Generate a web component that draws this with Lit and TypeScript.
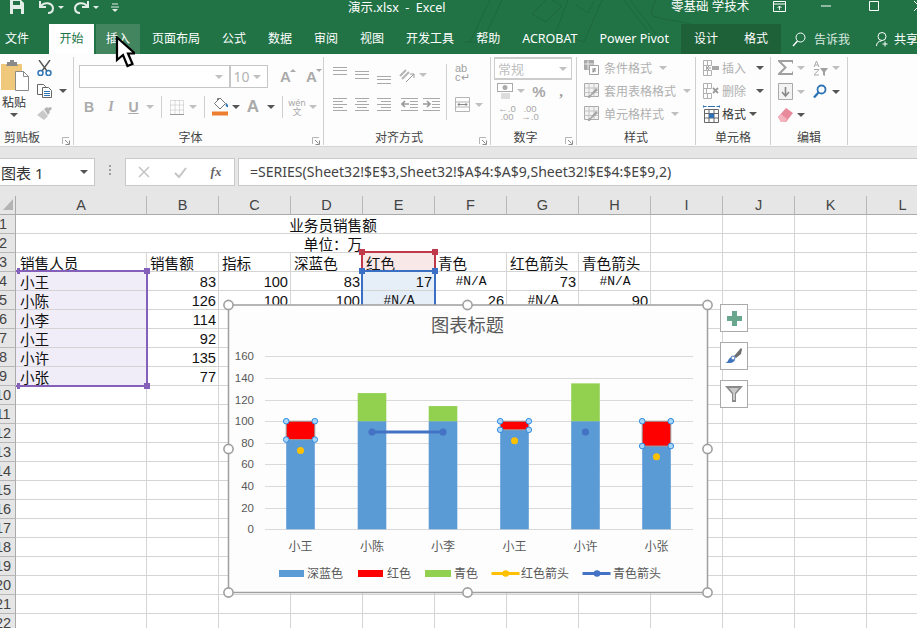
import { LitElement, html, css, svg, nothing } from 'lit';
import { customElement } from 'lit/decorators.js';

const GRAY = '#a9a9a9';

// small dropdown triangle used all over the ribbon
const caret = (dark = false) => html`<i class="caret ${dark ? 'dark' : ''}"></i>`;

const launcher = html`<svg class="launcher" width="8" height="8" viewBox="0 0 8 8">
  <path d="M.5 7V.5H7" fill="none" stroke="#b5b5b5"/><path d="M3 3l3.500 3.500M7.500 3.500v4h-4" fill="none" stroke="#8a8a8a"/>
</svg>`;

const lines = (rows: [number, number, number][], color = GRAY) =>
  rows.map(([y, a, b]) => svg`<path d="M${a} ${y + 0.5}H${b}" stroke=${color}/>`);

const alignV = (top: number) => html`<svg width="14" height="20" viewBox="0 0 14 20">
  ${lines([[top, 0, 14], [top + 3, 0, 14], [top + 7, 0, 14]])}
</svg>`;

const alignH = (kind: 'l' | 'c' | 'r') => {
  const short: [number, number] = kind === 'l' ? [0, 10] : kind === 'c' ? [2, 12] : [4, 14];
  return html`<svg width="14" height="14" viewBox="0 0 14 14">
    ${lines([[1, 0, 14], [4, short[0], short[1]], [7, 0, 14], [10, short[0], short[1]], [13, 0, 14]])}
  </svg>`;
};

const indent = (flip: boolean) => html`<svg width="17" height="14" viewBox="0 0 17 14">
  ${lines([[1, 0, 17], [13, 0, 17], [4, 9, 17], [7, 9, 17], [10, 9, 17]])}
  <path d=${flip ? 'M0 7h7M4 4l3 3-3 3' : 'M1 7h7M4 4L1 7l3 3'} fill="none" stroke="#999" stroke-width="1.600"/>
</svg>`;

const gridIcon = html`<svg width="14" height="15" viewBox="0 0 14 15">
  <path d="M.5.5h13v14H.5zM.5 5h13M.5 10h13M5 .5v14M9.500.5v14" fill="none" stroke="#bdbdbd" stroke-dasharray="1 1"/>
  <path d="M0 14.500h14" stroke="#999"/>
</svg>`;

const fillIcon = html`<svg width="17" height="20" viewBox="0 0 17 20">
  <path d="M8 1l5.500 5.500L8 12 2.500 6.500z" fill="#fff" stroke="#777"/>
  <path d="M5.500 3.500V1.500h2" fill="none" stroke="#777"/>
  <path d="M14 6c1.500 1 2.500 2.500 2 4-1 .5-2-.5-2.400-1.500z" fill="#2f75b5"/>
  <rect y="14.500" width="16" height="4" fill="#ed7d31"/>
</svg>`;

const tableStyle = html`<svg width="15" height="15" viewBox="0 0 15 15">
  <path d="M.5.5h14v13H.5z" fill="#f2f2f2" stroke="#aaa"/>
  <path d="M.5 5h14M.5 9.500h14M5 .5v13M10 .5v13" stroke="#c4c4c4"/>
  <path d="M4 15c0-2 .5-3 2-3l6-7 2 2-7 6c0 1.500-1 2-3 2z" fill="#a5a5a5"/>
</svg>`;

const condIcon = html`<svg width="15" height="15" viewBox="0 0 15 15">
  <path d="M.5.5h9v9h-9z" fill="#a8a8a8" stroke="#a8a8a8"/><path d="M.5 4h9M4 .5v9" stroke="#eee"/>
  <path d="M5.500 5.500h9v9h-9z" fill="#fff" stroke="#a0a0a0"/><path d="M8 9h4M8 11h4M11 8l-2 4.500" stroke="#888" fill="none"/>
</svg>`;

const cellInsert = (del: boolean) => html`<svg width="17" height="16" viewBox="0 0 17 16">
  <path d="M.5.5h8v5h-8zM4.500.5v5M.5 10.500h8v5h-8zM4.500 10.500v5" fill="none" stroke="#b0b0b0"/>
  <path d="M.5 5.500h3v5h-3z" fill="none" stroke="#b0b0b0"/>
  ${del
    ? svg`<path d="M10 5l5 5M15 5l-5 5" stroke="#9a9a9a" stroke-width="1.800" fill="none"/>`
    : svg`<path d="M4 8h4M6 6L4 8l2 2" fill="none" stroke="#999"/><rect x="9" y="6" width="7" height="4" fill="#a8a8a8"/>`}
</svg>`;

const cellFormat = html`<svg width="17" height="18" viewBox="0 0 17 18">
  <path d="M.5 1.500h3M.5.5v2M13.500 1.500h3M16.500.5v2M5 1.500h7" fill="none" stroke="#2f6fb5"/>
  <path d="M1.500 4.500h14v13h-14zM1.500 8.500h14M1.500 13h14M6 4.500v13M11 4.500v13" fill="none" stroke="#666"/>
  <rect x="6" y="8.500" width="5" height="4.500" fill="#2f6fb5"/>
</svg>`;

@customElement('app-root')
export class AppRoot extends LitElement {
  static styles = css`
    :host {
      display: block;
      width: 917px;
      height: 628px;
      overflow: hidden;
      background: #fff;
      font-family: 'Noto Sans', 'Noto Sans CJK SC', sans-serif;
      font-size: 12px;
      position: relative;
    }
    svg { display: block; flex: none; }

    /* title bar + tabs */
    .head { position: relative; height: 54px; background: #217346; color: #fff; overflow: hidden; }
    .sketch { position: absolute; left: 460px; top: 0; }
    .titlebar { position: relative; display: flex; align-items: center; height: 24px; }
    .qat { display: grid; grid-template-columns: 10px 14px 15px 15px 14px 6px 15px 14px 24px; align-items: center; justify-items: center; width: 348px; flex: none; height: 14px; margin-top: -10px; }
    .title { font-size: 12.500px; width: 323px; flex: none; margin-top: -12px; white-space: pre; }
    .account { font-size: 12.500px; width: 102px; flex: none; margin-top: -13px; white-space: nowrap; }
    .winbtns { display: grid; grid-template-columns: 13px 35px 10px 38px 10px 35px 10px; align-items: center; margin-top: -12px; }
    .tick { width: 0; height: 0; border-left: 3px solid transparent; border-right: 3px solid transparent; border-top: 3px solid #e4eee8; }
    .tabs { position: relative; display: flex; height: 30px; margin-left: -6px; width: 940px; }
    .tab { display: flex; flex: none; align-items: center; padding: 0 11px; white-space: nowrap; line-height: 1; }
    .tab.latin { font-size: 12.500px; }
    .tab.home { background: #fff; color: #217346; padding: 0 10px; margin: 0 2px 0 9px; width: 45px; box-sizing: border-box; justify-content: center; }
    .tab.hover { background: #43855f; padding: 0 10px; margin-right: 1px; }
    .ctx { display: flex; flex: none; background: #1e6139; margin-left: 1px; padding: 0 1px; height: 30px; width: 100px; box-sizing: border-box; justify-content: center; }
    .ctx .tab { padding: 0 13px; }
    .search { display: flex; flex: none; align-items: center; gap: 8px; margin-left: 11px; color: #dce9e1; white-space: nowrap; }
    .share { display: flex; flex: none; align-items: center; gap: 5px; margin-left: 26px; white-space: nowrap; }

    /* ribbon */
    .ribbon { display: flex; height: 93px; box-sizing: border-box; background: #fdfdfd; border-bottom: 1px solid #d4d4d4; color: #b0b0b0; }
    .group { position: relative; display: flex; flex-direction: column; flex: none; box-sizing: border-box; border-right: 1px solid #d0d0d0; height: 88px; margin-top: 3px; }
    .g-clip { width: 74px; }
    .g-font { width: 250px; padding-left: 5px; }
    .g-align { width: 167px; }
    .g-num { width: 86px; padding-left: 3px; }
    .g-style { width: 119px; padding-left: 7px; }
    .g-cell { width: 75px; padding-left: 7px; }
    .g-edit { width: 77px; padding-left: 6px; }
    .glabel { position: absolute; left: 0; right: 0; bottom: -2px; text-align: center; color: #444; line-height: 18px; }
    .shift { right: 16px; }
    .g-clip .glabel { right: 29px; }
    .launcher { position: absolute; right: 3px; bottom: 0; }
    .caret { display: block; width: 0; height: 0; border-left: 4px solid transparent; border-right: 4px solid transparent; border-top: 4px solid #c0c0c0; }
    .caret.dark { border-top-color: #555; }

    .clip { display: flex; padding-top: 3px; }
    .paste { display: flex; flex-direction: column; align-items: center; width: 26px; margin-right: 10px; margin-left: 1px; color: #333; font-size: 12px; }
    .paste b { font-weight: 400; line-height: 20px; margin-top: 2px; }
    .side { display: flex; flex-direction: column; gap: 8px; }
    .side div { display: flex; align-items: center; gap: 3px; }
    .side .caret { margin-left: 4px; }

    .combo { display: flex; align-items: center; justify-content: space-between; box-sizing: border-box; height: 23px; border: 1px solid #c6c6c6; padding: 0 6px; background: #fff; }
    .row1 { display: flex; align-items: center; margin-top: 8px; }
    .combo.name { width: 157px; border-right: none; }
    .combo.size { width: 41px; padding: 0 6px 0 3px; border-left-width: 2px; font-size: 14px; color: #b3b3b3; }
    .grow { display: grid; grid-template-columns: 29px 23px; justify-items: center; margin-left: 3px; }
    .bigA { position: relative; font: 700 15px 'Liberation Sans', sans-serif; color: #aaa; line-height: 16px; }
    .bigA i { position: absolute; right: -5px; top: 0; width: 0; height: 0; border-left: 3px solid transparent; border-right: 3px solid transparent; }
    .bigA i.up { border-bottom: 3px solid #aaa; }
    .bigA i.down { border-top: 3px solid #aaa; }
    .row2 { display: grid; grid-template-columns: 20px 24px 21px 12px 10px 21px 12px 10px 22px 10px 24px 11px 12px 18px 14px; align-items: center; justify-items: center; height: 24px; margin-top: 7px; }
    .fmt { font: 700 14px 'Liberation Sans', sans-serif; color: #aaa; }
    .fmt.i { font-style: italic; font-family: 'Liberation Serif', serif; }
    .fmt.u { text-decoration: underline; }
    .fmt.A { font-size: 17px; }
    .vsep { width: 1px; height: 22px; background: #d0d0d0; }
    .wen { display: flex; flex-direction: column; align-items: center; font-size: 9px; line-height: 9px; color: #aaa; }

    .aligns { display: flex; padding-left: 5px; }
    .a-rows { display: flex; flex-direction: column; width: 117px; }
    .a-top { display: grid; grid-template-columns: 22px 22px 22px 24px 8px; align-items: center; justify-items: center; height: 20px; margin-top: 8px; }
    .a-bot { display: grid; grid-template-columns: 22px 22px 22px 28px 16px; align-items: center; justify-items: center; margin-top: 12px; }
    .a-side { display: flex; flex-direction: column; border-left: 1px solid #d0d0d0; height: 56px; margin-top: 7px; padding-left: 8px; gap: 15px; }
    .wrapab { font: 11px/9px 'Liberation Sans', sans-serif; color: #a0a0a0; width: 15px; }
    .merge { display: flex; align-items: center; gap: 5px; }

    .combo.fmtbox { width: 78px; height: 23px; margin-top: 0; font-size: 13px; padding: 0 4px 0 3px; color: #bdbdbd; border-width: 2px 1px; border-color: #ccc; }
    .n-row { display: grid; grid-template-columns: 22px 10px 26px 18px; align-items: center; justify-items: center; margin-top: 2px; height: 18px; }
    .n-row2 { display: grid; grid-template-columns: 26px 20px; justify-items: center; margin-top: 5px; font: 9.500px/8px 'Liberation Sans', sans-serif; color: #a8a8a8; text-align: center; }
    .pct { font: 700 15px 'Liberation Sans', sans-serif; color: #a8a8a8; }
    .comma { font: 700 15px/10px 'Liberation Serif', serif; color: #999; }

    .s-rows { display: flex; flex-direction: column; gap: 4px; padding-top: 1px; }
    .s-row { display: flex; align-items: center; height: 19px; gap: 5px; white-space: nowrap; }
    .s-row .caret { margin-left: 2px; }
    .c-row { display: flex; align-items: center; height: 19px; gap: 2px; white-space: nowrap; }
    .c-row span { width: 24px; }
    .c-row .caret { margin-left: 8px; }
    .c-row.on { color: #333; }
    .c-row.on .caret { margin-left: 1px; }
    .e-grid { display: grid; grid-template-columns: 17px 14px 24px 8px; row-gap: 6px; align-items: center; justify-items: center; padding-top: 2px; height: 64px; }

    /* formula bar */
    .fbar { display: flex; align-items: flex-start; height: 49px; background: #e6e6e6; padding-top: 11px; box-sizing: border-box; }
    .namebox { display: flex; align-items: center; justify-content: space-between; box-sizing: border-box; width: 95px; height: 28px; background: #fff; border: 1px solid #c9c9c9; border-left: none; padding: 0 6px 0 1px; font-size: 15px; color: #333; }
    .dots { width: 30px; display: grid; justify-items: center; row-gap: 2px; padding-top: 7px; }
    .dots i { width: 2px; height: 2px; background: #a0a0a0; }
    .fxbox { display: grid; grid-template-columns: 36px 36px 36px; align-items: center; justify-items: center; width: 110px; height: 28px; box-sizing: border-box; background: #fff; border: 1px solid #c9c9c9; color: #999; }
    .fx { font: italic 700 13px 'Liberation Serif', serif; color: #666; }
    .formula { flex: 1; height: 28px; margin-left: 3px; box-sizing: border-box; background: #fff; border: 1px solid #c9c9c9; border-right: none; padding-left: 11px; font: 14.050px/26px 'Noto Sans', sans-serif; color: #444; white-space: nowrap; }

    /* sheet */
    .sheet { position: relative; height: 432px; overflow: hidden; }
    .cells { display: grid; grid-template-columns: 16px 131px repeat(11, 72px); grid-template-rows: 19px; grid-auto-rows: 19px; font-size: 14.600px; color: #111; }
    .corner { background: #e6e6e6; border-right: 1px solid #aaa; border-bottom: 1px solid #aaa; box-sizing: border-box; position: relative; }
    .corner i { display: block; width: 0; height: 0; margin: 3px 0 0 3px; border-left: 10px solid transparent; border-bottom: 11px solid #b4b4b4; }
    .ch { background: #e6e6e6; border-right: 1px solid #b8b8b8; border-bottom: 1px solid #aaa; box-sizing: border-box; text-align: center; font: 14.500px/19px 'Liberation Sans', sans-serif; color: #444; }
    .rh { background: #e6e6e6; border-right: 1px solid #aaa; border-bottom: 1px solid #b8b8b8; box-sizing: border-box; overflow: hidden; font: 14.500px/19px 'Liberation Sans', sans-serif; color: #444; }
    .rh span { display: block; width: 22px; margin-left: -8px; text-align: center; }
    .cell { border-right: 1px solid #d4d4d4; border-bottom: 1px solid #d4d4d4; box-sizing: border-box; padding: 0 2px 0 3px; line-height: 20px; white-space: nowrap; overflow: hidden; }
    .cell.col-a { padding-left: 4px; }
    .cell.merged { grid-column: span 8; text-align: center; padding: 0 2px; }
    .cell.num { text-align: right; font-family: 'Liberation Sans', sans-serif; }
    .cell.na { text-align: center; font: 13px/19px 'Liberation Mono', monospace; }
    .cell.tint-a { background: #f0edf8; }
    .cell.tint-r { background: #f9e8e8; }
    .cell.tint-b { background: #e6eef8; }

    .range { position: absolute; box-sizing: border-box; border: 2px solid; pointer-events: none; }
    .range i { position: absolute; width: 6px; height: 6px; background: currentColor; }
    .range i.tl { left: -4px; top: -4px; }
    .range i.tr { right: -4px; top: -4px; }
    .range i.bl { left: -4px; bottom: -4px; }
    .range i.br { right: -4px; bottom: -4px; }
    .r-a { left: 16px; top: 74px; width: 132px; height: 117px; border-left: none; color: #8560ba; border-color: #8560ba; }
    .r-a i.tl, .r-a i.bl { left: 1px; width: 3px; }
    .r-red { left: 361px; top: 55px; width: 75px; height: 21px; color: #c0394a; border-color: #c0394a; }
    .r-blue { left: 361px; top: 74px; width: 75px; height: 117px; color: #3a6fc4; border-color: #3a6fc4; }

    .chart { position: absolute; left: 220px; top: 99px; }
    .chart text { font-family: 'Noto Sans CJK SC', sans-serif; fill: #595959; }
    .chart text.ax { font-family: 'Liberation Sans', sans-serif; font-size: 11.500px; }
    .tools { position: absolute; left: 720px; top: 108px; display: flex; flex-direction: column; gap: 10px; }
    .tool { display: flex; align-items: center; justify-content: center; width: 28px; height: 28px; box-sizing: border-box; background: #fff; border: 1px solid #aaa; }
    .cursor { position: absolute; left: 115px; top: 36px; }
  `;

  private renderHead() {
    return html`<div class="head">
      <svg class="sketch" width="240" height="54" viewBox="0 0 240 54" fill="none" stroke="#1e673d" stroke-width="1">
        <path d="M10 42L30 0M22 42L42 0M4 42h18"/><path d="M72 14L86 0M86 22l16-16M72 14l14 8M102 6L92 0"/>
        <path d="M96 32L108 0M124 42L142 0M96 32l28 10"/><path d="M116 5l12 8 6-12"/>
        <path d="M164 0l26 34M170 0l26 34"/><path d="M196 0c-4 8-6 14-3 16 10 4 26 5 38 8"/><path d="M230 24v18"/>
      </svg>
      <div class="titlebar">
        <div class="qat">
          <span></span>
          <svg width="14" height="14" viewBox="0 0 14 14"><path d="M0 0h11l3 3v11H0z" fill="#e4eee8"/><path d="M3 1h7v4H3zM3 9h8v5H3z" fill="#217346"/></svg>
          <span></span>
          <svg width="15" height="13" viewBox="0 0 15 13"><path d="M2 5c3-4 11-4 12 2 0 3-2 5-5 5" fill="none" stroke="#e4eee8" stroke-width="2"/><path d="M1 0v6h6" fill="none" stroke="#e4eee8" stroke-width="2"/></svg>
          <i class="tick"></i>
          <span></span>
          <svg width="15" height="13" viewBox="0 0 15 13"><path d="M13 5C10 1 2 1 1 7c0 3 2 5 5 5" fill="none" stroke="#e4eee8" stroke-width="2"/><path d="M14 0v6H8" fill="none" stroke="#e4eee8" stroke-width="2"/></svg>
          <i class="tick"></i>
          <svg width="8" height="9" viewBox="0 0 8 9"><path d="M1 1h6M0 4h8" stroke="#e4eee8"/><path d="M1 6h6l-3 3z" fill="#e4eee8"/></svg>
        </div>
        <div class="title">演示.xlsx  -  Excel</div>
        <div class="account">零基础 学技术</div>
        <div class="winbtns">
          <svg width="13" height="11" viewBox="0 0 13 11"><path d="M.5.5h12v10H.5zM.5 3h12M6.500 9V5M4.500 7l2-2 2 2" fill="none" stroke="#fff"/></svg>
          <span></span>
          <svg width="10" height="2" viewBox="0 0 10 2"><path d="M0 1h10" stroke="#fff"/></svg>
          <span></span>
          <svg width="10" height="10" viewBox="0 0 10 10"><path d="M.5.5h9v9h-9z" fill="none" stroke="#fff"/></svg>
          <span></span>
          <svg width="10" height="10" viewBox="0 0 10 10"><path d="M0 0l10 10M10 0L0 10" stroke="#fff"/></svg>
        </div>
      </div>
      <div class="tabs">
        <div class="tab">文件</div>
        <div class="tab home">开始</div>
        <div class="tab hover">插入</div>
        ${['页面布局', '公式', '数据', '审阅', '视图', '开发工具', '帮助'].map(t => html`<div class="tab">${t}</div>`)}
        <div class="tab latin">ACROBAT</div>
        <div class="tab latin">Power Pivot</div>
        <div class="ctx"><div class="tab">设计</div><div class="tab">格式</div></div>
        <div class="search">
          <svg width="14" height="15" viewBox="0 0 14 15"><circle cx="8.500" cy="5.500" r="4.500" fill="none" stroke="#fff"/><path d="M5.500 9L1 14" stroke="#fff" stroke-width="1.400"/></svg>
          <span>告诉我</span>
        </div>
        <div class="share">
          <svg width="13" height="15" viewBox="0 0 13 15"><circle cx="6" cy="4.500" r="4" fill="none" stroke="#fff"/><path d="M.5 14c0-3 2-5 5-5M9 9.500v5M6.500 12h5" fill="none" stroke="#fff"/></svg>
          <span>共享</span>
        </div>
      </div>
    </div>`;
  }

  private renderRibbon() {
    return html`<div class="ribbon">
      <div class="group g-clip">
        <div class="clip">
          <div class="paste">
            <svg width="29" height="31" viewBox="0 0 29 31">
              <path d="M1 4h21v26H1z" fill="#f0c87c"/>
              <path d="M7 4V2h3V0h4v2h3v2l1 2H6z" fill="#8a8a8a"/>
              <path d="M15.500 11.500h8l5 5v14h-13z" fill="#fff" stroke="#8a8a8a"/>
              <path d="M23.500 11.500v5h5" fill="none" stroke="#8a8a8a"/>
            </svg>
            <b>粘贴</b>
            <i class="caret dark"></i>
          </div>
          <div class="side">
            <svg width="15" height="16" viewBox="0 0 15 16">
              <path d="M2 0l8 11M13 0L5 11" stroke="#555" stroke-width="1.400"/>
              <circle cx="3.500" cy="13" r="2.500" fill="none" stroke="#2f75b5" stroke-width="1.500"/>
              <circle cx="11.500" cy="13" r="2.500" fill="none" stroke="#2f75b5" stroke-width="1.500"/>
            </svg>
            <div>
              <svg width="15" height="14" viewBox="0 0 15 14">
                <path d="M.5.5h6l2 2v8h-8z" fill="#fff" stroke="#666"/>
                <path d="M5.500 3.500h6l3 3v7h-9z" fill="#fff" stroke="#666"/>
                <path d="M7 7.500h6M7 9.500h6M7 11.500h6" stroke="#2f75b5"/>
              </svg>
              ${caret(true)}
            </div>
            <svg width="16" height="14" viewBox="0 0 16 14">
              <path d="M0 9l6-5 5 6-4 4z" fill="#c9c9c9"/><path d="M7 3l3-2 1 1 2-1 2 1-1 2-2 1 1 1-2 3z" fill="#b5b5b5"/>
            </svg>
          </div>
        </div>
        <div class="glabel">剪贴板</div>${launcher}
      </div>

      <div class="group g-font">
        <div class="row1">
          <div class="combo name"><span></span>${caret()}</div>
          <div class="combo size"><span>10</span>${caret()}</div>
          <div class="grow">
            <span class="bigA">A<i class="up"></i></span>
            <span class="bigA">A<i class="down"></i></span>
          </div>
        </div>
        <div class="row2">
          <span class="fmt">B</span><span class="fmt i">I</span><span class="fmt u">U</span>${caret()}
          <i class="vsep"></i>${gridIcon}${caret()}<i class="vsep"></i>
          ${fillIcon}${caret(true)}<span class="fmt A">A</span>${caret(true)}<i class="vsep"></i>
          <span class="wen"><span>wén</span><span>文</span></span>${caret()}
        </div>
        <div class="glabel shift">字体</div>${launcher}
      </div>

      <div class="group g-align">
        <div class="aligns">
          <div class="a-rows">
            <div class="a-top">
              ${alignV(2)}${alignV(6)}${alignV(11)}
              <svg width="16" height="16" viewBox="0 0 16 16"><path d="M1 9l6-6M3 12l7-7" stroke="#b5b5b5" fill="none" stroke-width="2"/><path d="M7 15L15 7M15 7v4M15 7h-4" stroke="#999" fill="none"/></svg>
              ${caret()}
            </div>
            <div class="a-bot">
              ${alignH('l')}${alignH('c')}${alignH('r')}${indent(false)}${indent(true)}
            </div>
          </div>
          <div class="a-side">
            <div class="wrapab">ab<br />c<span>↵</span></div>
            <div class="merge">
              <svg width="15" height="15" viewBox="0 0 15 15"><path d="M.5.5h14v14H.5zM.5 5h14M.5 10h14" fill="none" stroke="#b5b5b5"/><path d="M3 7.500h9M4.500 6L3 7.500 4.500 9M10.500 6L12 7.500 10.500 9" fill="none" stroke="#888"/></svg>
              ${caret()}
            </div>
          </div>
        </div>
        <div class="glabel shift">对齐方式</div>${launcher}
      </div>

      <div class="group g-num">
        <div class="combo fmtbox"><span>常规</span>${caret()}</div>
        <div class="n-row">
          <svg width="16" height="16" viewBox="0 0 16 16"><rect x=".5" y=".5" width="15" height="8" fill="#fff" stroke="#aaa"/><circle cx="8" cy="4.500" r="2.500" fill="#aaa"/><path d="M4 11h9M4 13h9M4 15h9" stroke="#bbb"/></svg>
          ${caret()}<span class="pct">%</span><span class="comma">,</span>
        </div>
        <div class="n-row2">
          <span>←.0<br />.00</span><span>.00<br />→.0</span>
        </div>
        <div class="glabel shift">数字</div>${launcher}
      </div>

      <div class="group g-style">
        <div class="s-rows">
          <div class="s-row">${condIcon}<span>条件格式</span>${caret()}</div>
          <div class="s-row">${tableStyle}<span>套用表格格式</span>${caret()}</div>
          <div class="s-row">${tableStyle}<span>单元格样式</span>${caret()}</div>
        </div>
        <div class="glabel">样式</div>
      </div>

      <div class="group g-cell">
        <div class="s-rows">
          <div class="c-row">${cellInsert(false)}<span>插入</span>${caret(true)}</div>
          <div class="c-row">${cellInsert(true)}<span>删除</span>${caret(true)}</div>
          <div class="c-row on">${cellFormat}<span>格式</span>${caret(true)}</div>
        </div>
        <div class="glabel">单元格</div>
      </div>

      <div class="group g-edit">
        <div class="e-grid">
          <svg width="15" height="15" viewBox="0 0 15 15"><path d="M15 3.500V1H1l6.500 6.500L1 14h14v-2.500" fill="none" stroke="#a0a0a0" stroke-width="2"/></svg>
          ${caret()}
          <svg width="15" height="16" viewBox="0 0 15 16"><path d="M7 8h8l-3 4v4l-2-1v-3z" fill="#a0a0a0"/><path d="M1 7l2.500-6L6 7M2 5h3M1 9.500h5L1 15h5" fill="none" stroke="#aaa"/></svg>
          ${caret()}
          <svg width="15" height="17" viewBox="0 0 15 17"><path d="M.5.5h14v16H.5z" fill="#f3f3f3" stroke="#aaa"/><path d="M7.500 4v9M4 9l3.500 4L11 9" fill="none" stroke="#888" stroke-width="1.600"/></svg>
          ${caret()}
          <svg width="14" height="15" viewBox="0 0 14 15"><circle cx="8.500" cy="5.500" r="4" fill="none" stroke="#2f75b5" stroke-width="1.800"/><path d="M5.500 8.500L1 13.500" stroke="#2f75b5" stroke-width="2.400"/></svg>
          ${caret(true)}
          <svg width="15" height="14" viewBox="0 0 15 14"><path d="M0 9l8-9 7 5-7 9H3z" fill="#e88a9c"/><path d="M0 9l3-3 6 5-2 3H3z" fill="#f3b3bf"/></svg>
          ${caret(true)}
        </div>
        <div class="glabel">编辑</div>
      </div>
    </div>`;
  }

  private renderFormula() {
    return html`<div class="fbar">
      <div class="namebox"><span>图表 1</span>${caret(true)}</div>
      <div class="dots"><i></i><i></i><i></i></div>
      <div class="fxbox">
        <svg width="12" height="12" viewBox="0 0 12 12"><path d="M1 1l10 10M11 1L1 11" stroke="#c4c4c4" stroke-width="1.500"/></svg>
        <svg width="13" height="11" viewBox="0 0 13 11"><path d="M1 6l4 4 7-9" fill="none" stroke="#c4c4c4" stroke-width="2"/></svg>
        <span class="fx">fx</span>
      </div>
      <div class="formula">=SERIES(Sheet32!$E$3,Sheet32!$A$4:$A$9,Sheet32!$E$4:$E$9,2)</div>
    </div>`;
  }

  private renderCells() {
    const cols = 'ABCDEFGHIJKL'.split('');
    const table: (string | number)[][] = [
      ['销售人员', '销售额', '指标', '深蓝色', '红色', '青色', '红色箭头', '青色箭头'],
      ['小王', 83, 100, 83, 17, '#N/A', 73, '#N/A'],
      ['小陈', 126, 100, 100, '#N/A', 26, '#N/A', 90],
      ['小李', 114, 100, 100, '#N/A', 14, '#N/A', 90],
      ['小王', 92, 100, 92, 8, '#N/A', 82, '#N/A'],
      ['小许', 135, 100, 100, '#N/A', 35, '#N/A', 90],
      ['小张', 77, 100, 77, 23, '#N/A', 67, '#N/A'],
    ];
    const out: unknown[] = [html`<div class="corner"><i></i></div>`];
    cols.forEach(c => out.push(html`<div class="ch">${c}</div>`));
    for (let r = 1; r <= 22; r++) {
      out.push(html`<div class="rh"><span>${r}</span></div>`);
      if (r <= 2) {
        out.push(html`<div class="cell merged">${r === 1 ? '业务员销售额' : '单位：万'}</div>`);
        for (let c = 8; c < 12; c++) out.push(html`<div class="cell"></div>`);
        continue;
      }
      const row = table[r - 3];
      for (let c = 0; c < 12; c++) {
        const v = row && c < row.length ? row[c] : '';
        const tint = row && r > 3 && c === 0 ? 'tint-a' : r === 3 && c === 4 ? 'tint-r' : r > 3 && r <= 9 && c === 4 ? 'tint-b' : '';
        const kind = typeof v === 'number' ? 'num' : v === '#N/A' ? 'na' : c === 0 ? 'col-a' : '';
        out.push(html`<div class="cell ${kind} ${tint}">${v}</div>`);
      }
    }
    return out;
  }

  private renderChart() {
    const base = 529.3;
    const k = 1.081;
    const y = (v: number) => base - v * k;
    const W = 28.6;
    const data: { n: string; x: number; total: number; red?: number; arrow?: number; blue?: number }[] = [
      { n: '小王', x: 300.5, total: 83, red: 17, arrow: 73 },
      { n: '小陈', x: 372, total: 126, blue: 90 },
      { n: '小李', x: 443, total: 114, blue: 90 },
      { n: '小王', x: 514.5, total: 92, red: 8, arrow: 82 },
      { n: '小许', x: 585.5, total: 135, blue: 90 },
      { n: '小张', x: 656.5, total: 77, red: 23, arrow: 67 },
    ];
    const circles: [number, number][] = [
      [228.5, 305], [467.5, 305], [707.5, 305], [228.5, 449], [707.5, 449], [228.5, 592.5], [467.5, 592.5], [707.5, 592.5],
    ];
    const legend = [
      { x: 279, w: 25, c: '#5b9bd5', t: '深蓝色', tx: 307 },
      { x: 358, w: 25, c: '#ff0000', t: '红色', tx: 387 },
      { x: 425, w: 26, c: '#92d050', t: '青色', tx: 454 },
    ];
    return html`<svg class="chart" width="500" height="310" viewBox="220 295 500 310">
      <rect x="228.500" y="305" width="479" height="287.500" fill="#fdfdfd" stroke="#9f9f9f" stroke-width="1.500"/>
      <text x="467.500" y="332" font-size="18.250" text-anchor="middle">图表标题</text>
      ${[0, 20, 40, 60, 80, 100, 120, 140, 160].map(v => svg`
        <path d="M265 ${Math.round(y(v)) + 0.5}H693" stroke="#d9d9d9"/>
        <text class="ax" x="254" y=${y(v) + 4} text-anchor="end">${v}</text>`)}
      ${data.map(d => {
        const l = d.x - W / 2;
        const dark = Math.min(d.total, 100);
        return svg`
          <rect x=${l} y=${y(dark)} width=${W} height=${dark * k} fill="#5b9bd5"/>
          ${d.total > 100 ? svg`<rect x=${l} y=${y(d.total)} width=${W} height=${(d.total - 100) * k} fill="#92d050"/>` : nothing}
          ${d.red ? svg`<rect x=${l} y=${y(100)} width=${W} height=${d.red * k} fill="#ff0000" stroke="#9a9a9a"/>` : nothing}
          ${d.arrow ? svg`<circle cx=${d.x} cy=${y(d.arrow)} r="3.500" fill="#ffc000"/>` : nothing}
          ${d.red
            ? [[l, y(100)], [l + W, y(100)], [l, y(100 - d.red)], [l + W, y(100 - d.red)]].map(
                ([cx, cy]) => svg`<circle cx=${cx} cy=${cy} r="2.800" fill="#a9d5fb" stroke="#2e8be0"/>`
              )
            : nothing}
          <text x=${d.x} y="551" font-size="12" text-anchor="middle">${d.n}</text>`;
      })}
      <path d="M372 ${y(90)}H443" stroke="#4472c4" stroke-width="3"/>
      ${data.filter(d => d.blue).map(d => svg`<circle cx=${d.x} cy=${y(d.blue as number)} r="3.600" fill="#4472c4"/>`)}
      ${legend.map(l => svg`
        <rect x=${l.x} y="570" width=${l.w} height="7" fill=${l.c}/>
        <text x=${l.tx} y="577.500" font-size="12">${l.t}</text>`)}
      <path d="M491.500 573.500H519.500" stroke="#ffc000" stroke-width="3"/><circle cx="505.700" cy="573.500" r="3.300" fill="#ffc000"/>
      <text x="521" y="577.500" font-size="12">红色箭头</text>
      <path d="M582.500 573.500H610.500" stroke="#4472c4" stroke-width="3"/><circle cx="597" cy="573.500" r="3.300" fill="#4472c4"/>
      <text x="613" y="577.500" font-size="12">青色箭头</text>
      ${circles.map(([cx, cy]) => svg`<circle cx=${cx} cy=${cy} r="4.600" fill="#fff" stroke="#9f9f9f" stroke-width="1.600"/>`)}
    </svg>`;
  }

  render() {
    return html`
      ${this.renderHead()}
      ${this.renderRibbon()}
      ${this.renderFormula()}
      <div class="sheet">
        <div class="cells">${this.renderCells()}</div>
        <div class="range r-red"><i class="tl"></i><i class="tr"></i></div>
        <div class="range r-a"><i class="tl"></i><i class="tr"></i><i class="bl"></i><i class="br"></i></div>
        <div class="range r-blue"><i class="tl"></i><i class="tr"></i><i class="bl"></i><i class="br"></i></div>
        ${this.renderChart()}
        <div class="tools">
          <div class="tool"><svg width="15" height="15" viewBox="0 0 15 15"><path d="M5 0h5v5h5v5h-5v5H5v-5H0V5h5z" fill="#68a78e"/></svg></div>
          <div class="tool"><svg width="18" height="18" viewBox="0 0 18 18"><path d="M9 9l7-8 1 1-1 5-5 4z" fill="#6e6e6e"/><path d="M0 16c3 0 3-4 5-5 2-1 4 0 5 2-1 2-3 3-5 3z" fill="#3f74bd"/><circle cx="8" cy="11" r="2" fill="#fff" stroke="#3f74bd"/></svg></div>
          <div class="tool"><svg width="18" height="18" viewBox="0 0 18 18"><path d="M0 1h18l-7 8v8H7V9z" fill="#8a8a8a"/><path d="M4 3h10l-4 5v7H8V8z" fill="#c9c9c9"/></svg></div>
        </div>
      </div>
      <svg class="cursor" width="20" height="32" viewBox="0 0 20 32">
        <path d="M2 1.500V24l6-5 4.500 11 5-2L13 17.500h7z" fill="#fff" stroke="#000" stroke-width="2.200"/>
      </svg>
    `;
  }
}
